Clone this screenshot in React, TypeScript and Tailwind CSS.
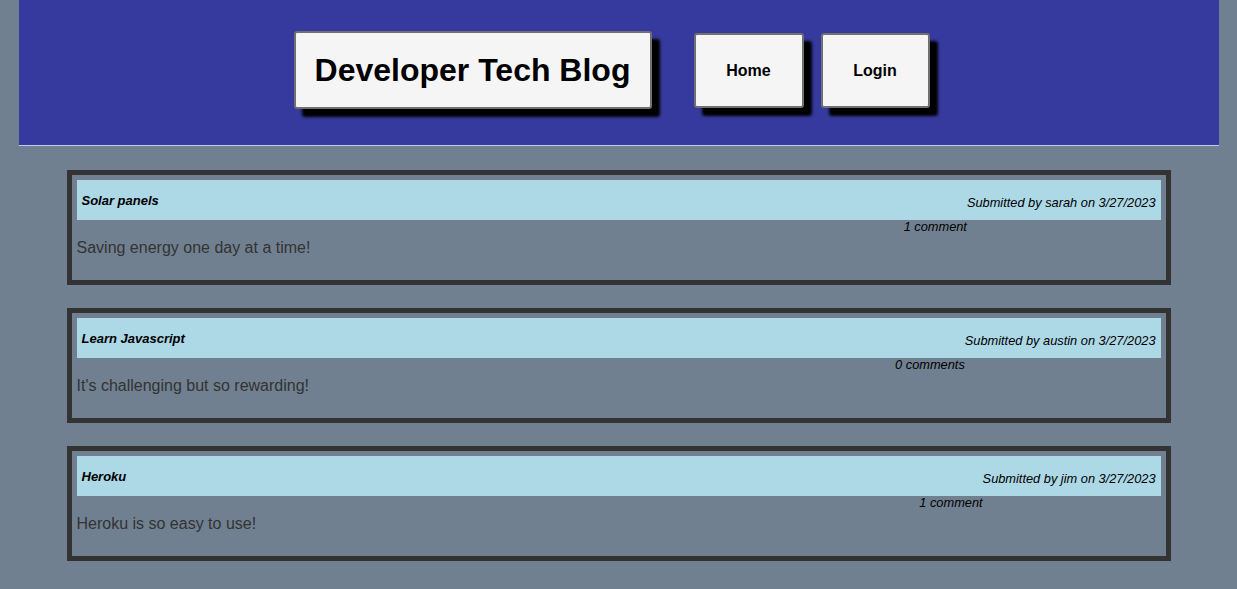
const posts = [
  {
    title: 'Solar panels',
    author: 'sarah',
    date: '3/27/2023',
    comments: '1 comment',
    body: 'Saving energy one day at a time!',
  },
  {
    title: 'Learn Javascript',
    author: 'austin',
    date: '3/27/2023',
    comments: '0 comments',
    body: "It's challenging but so rewarding!",
  },
  {
    title: 'Heroku',
    author: 'jim',
    date: '3/27/2023',
    comments: '1 comment',
    body: 'Heroku is so easy to use!',
  },
];

const PostCard = ({ post }: { post: (typeof posts)[number] }) => (
  <div className="border-[5px] border-[#333333] p-[5px] h-[115px]">
    <div className="h-[40px] bg-[#add8e6] flex items-center justify-between px-[5px]">
      <h2 className="mt-[2px] text-[13px] font-bold italic text-black">{post.title}</h2>
      <div className="relative mt-[6px] text-[12.8px] italic text-black whitespace-nowrap">
        Submitted by {post.author} on {post.date}
        <span className="absolute right-full top-[24px] whitespace-nowrap">
          {post.comments}
        </span>
      </div>
    </div>
    <p className="mt-[19px] text-[16px] leading-[18px] text-[#333333]">{post.body}</p>
  </div>
);

export default function App() {
  return (
    <div className="min-h-screen bg-[#708090] font-['Liberation_Sans',Arial,sans-serif]">
      <header className="w-[1200px] mx-auto h-[146px] bg-[#363a9e] border-b border-[#c4c8ee] flex items-start justify-center pr-[14px]">
        <div className="mt-[31px] flex items-start">
          <div className="w-[358px] h-[78px] bg-[#f5f5f5] border-2 border-[#707070] rounded-[3px] shadow-[8px_8px_3px_#000] flex items-center justify-center">
            <h1 className="text-[32px] font-bold text-black">Developer Tech Blog</h1>
          </div>
          <nav className="ml-[42px] mt-[2px] flex gap-[17px]">
            <a className="w-[110px] h-[75px] bg-[#f5f5f5] border-2 border-[#707070] rounded-[3px] shadow-[8px_8px_3px_#000] flex items-center justify-center text-[16px] font-bold text-black">
              Home
            </a>
            <a className="w-[109px] h-[75px] bg-[#f5f5f5] border-2 border-[#707070] rounded-[3px] shadow-[8px_8px_3px_#000] flex items-center justify-center text-[16px] font-bold text-black">
              Login
            </a>
          </nav>
        </div>
      </header>
      <main className="w-[1104px] mx-auto pt-[24px] flex flex-col gap-[23px] pb-[24px]">
        {posts.map((post) => (
          <PostCard key={post.title} post={post} />
        ))}
      </main>
    </div>
  );
}
